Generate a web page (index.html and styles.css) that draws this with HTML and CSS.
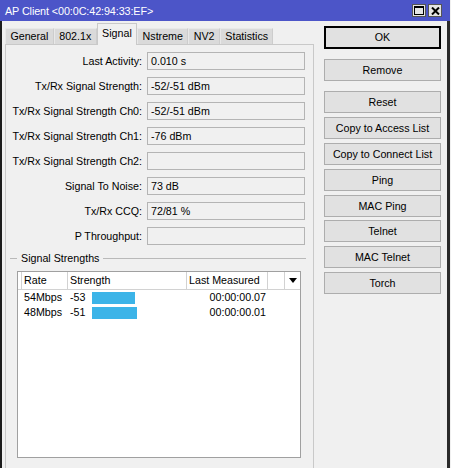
FILE: index.html
```html
<!DOCTYPE html>
<html>
<head>
<meta charset="utf-8">
<link rel="stylesheet" href="styles.css">
</head>
<body>
<div class="window">
  <div class="titlebar">
    <span class="title">AP Client &lt;00:0C:42:94:33:EF&gt;</span>
    <div class="ctls">
      <span class="ctl"><svg width="10" height="9" viewBox="0 0 10 9"><rect x="0.5" y="0.5" width="9" height="8" fill="none" stroke="#000"/><rect x="0" y="0" width="10" height="2" fill="#000"/></svg></span>
      <span class="ctl"><svg width="9" height="8" viewBox="0 0 9 8"><path d="M1 0.5 L8 7.5 M8 0.5 L1 7.5" stroke="#000" stroke-width="2"/></svg></span>
    </div>
  </div>
  <div class="frame">
    <div class="left">
      <div class="tabs">
        <span class="tab">General</span>
        <span class="tab">802.1x</span>
        <span class="tab active">Signal</span>
        <span class="tab">Nstreme</span>
        <span class="tab">NV2</span>
        <span class="tab">Statistics</span>
      </div>
      <div class="panel">
        <div class="form">
          <label>Last Activity:</label><div class="field">0.010 s</div>
          <label>Tx/Rx Signal Strength:</label><div class="field">-52/-51 dBm</div>
          <label>Tx/Rx Signal Strength Ch0:</label><div class="field">-52/-51 dBm</div>
          <label>Tx/Rx Signal Strength Ch1:</label><div class="field">-76 dBm</div>
          <label>Tx/Rx Signal Strength Ch2:</label><div class="field"></div>
          <label>Signal To Noise:</label><div class="field">73 dB</div>
          <label>Tx/Rx CCQ:</label><div class="field">72/81 %</div>
          <label>P Throughput:</label><div class="field"></div>
        </div>
        <div class="group">
          <div class="group-head"><span class="gline short"></span><span class="glabel">Signal Strengths</span><span class="gline"></span></div>
          <div class="table">
            <div class="row head">
              <span class="c c0"></span>
              <span class="c">Rate</span>
              <span class="c">Strength</span>
              <span class="c">Last Measured</span>
              <span class="c"></span>
              <span class="c arrow"><span class="tri"></span></span>
            </div>
            <div class="row">
              <span class="c c0"></span>
              <span class="c">54Mbps</span>
              <span class="c strength"><span class="num">-53</span><span class="bar" style="width:43px"></span></span>
              <span class="c time">00:00:00.07</span>
              <span class="c"></span>
              <span class="c"></span>
            </div>
            <div class="row">
              <span class="c c0"></span>
              <span class="c">48Mbps</span>
              <span class="c strength"><span class="num">-51</span><span class="bar" style="width:45px"></span></span>
              <span class="c time">00:00:00.01</span>
              <span class="c"></span>
              <span class="c"></span>
            </div>
          </div>
        </div>
      </div>
    </div>
    <div class="buttons">
      <div class="btn default">OK</div>
      <div class="btn sep">Remove</div>
      <div class="btn sep">Reset</div>
      <div class="btn">Copy to Access List</div>
      <div class="btn">Copy to Connect List</div>
      <div class="btn">Ping</div>
      <div class="btn">MAC Ping</div>
      <div class="btn">Telnet</div>
      <div class="btn">MAC Telnet</div>
      <div class="btn">Torch</div>
    </div>
  </div>
</div>
</body>
</html>
```
FILE: styles.css
```css
html, body {
  margin: 0;
  padding: 0;
  background: #f0f0f0;
}
body {
  font-family: "Liberation Sans", Arial, sans-serif;
  font-size: 10.7px;
  color: #000;
}
.window {
  width: 450px;
  height: 468px;
  display: flex;
  flex-direction: column;
  overflow: hidden;
}
.titlebar {
  height: 21px;
  flex: none;
  background: #4c55c8;
  color: #fff;
  display: flex;
  align-items: center;
  padding: 0 8px 0 5px;
}
.title {
  font-size: 10.8px;
  letter-spacing: -0.1px;
}
.ctls {
  margin-left: auto;
  display: flex;
  gap: 2px;
}
.ctl {
  width: 12px;
  height: 11px;
  border: 1px solid #555;
  background: #e4e4e4;
  display: flex;
  align-items: center;
  justify-content: center;
}
.ctl svg { display: block; }
.frame {
  flex: 1;
  display: flex;
  gap: 10px;
  border-left: 2px solid #1c1c1c;
  border-right: 3px solid #2a2a2a;
  padding: 3px 6px 0 3px;
  background: #f0f0f0;
  min-height: 0;
}
.left {
  width: 309px;
  display: flex;
  flex-direction: column;
}
.tabs {
  height: 20px;
  display: flex;
  align-items: flex-end;
  position: relative;
  z-index: 1;
}
.tab {
  height: 15px;
  line-height: 15px;
  padding: 0 4.4px;
  background: #dadada;
  border: 1px solid #e8e8e8;
  border-bottom: none;
  border-right-color: #cdcdcd;
}
.tab.active {
  line-height: 18px;
  background: #f0f0f0;
  border: 1px solid #c9c9c9;
  border-bottom: none;
  margin-bottom: -1px;
  height: 21px;
}
.panel {
  flex: 1;
  border: 1px solid #c9c9c9;
  border-bottom: none;
  background: #f0f0f0;
  padding-top: 7px;
}
.form {
  display: grid;
  grid-template-columns: 136px 158px;
  column-gap: 5px;
  row-gap: 7px;
  align-items: center;
}
.form label {
  text-align: right;
  white-space: nowrap;
}
.field {
  height: 18px;
  box-sizing: border-box;
  border: 1px solid #b4b4b4;
  background: #f0f0f0;
  padding-left: 3px;
  line-height: 16px;
}
.group {
  margin: 6px 7px 0 4px;
}
.group-head {
  display: flex;
  align-items: center;
  height: 14px;
}
.gline {
  flex: 1;
  height: 1px;
  background: #b9b9b9;
}
.gline.short {
  flex: none;
  width: 7px;
}
.glabel {
  padding: 0 4px;
}
.table {
  margin: 6px 5px 0 7px;
  height: 187px;
  box-sizing: border-box;
  border: 1px solid #a0a0a0;
  background: #fff;
}
.row {
  display: grid;
  grid-template-columns: 4px 46px 119px 81px 17px 15px;
  height: 15px;
  line-height: 15px;
}
.row.head {
  height: 17px;
  line-height: 17px;
  border-bottom: 1px solid #d2d2d2;
}
.c {
  padding-left: 2px;
  white-space: nowrap;
  overflow: hidden;
}
.c0 { padding: 0; }
.head .c {
  border-right: 1px solid #d2d2d2;
}
.head .c.arrow {
  border-right: none;
  display: flex;
  align-items: center;
  justify-content: center;
  padding: 0;
}
.tri {
  width: 0;
  height: 0;
  border-left: 4.5px solid transparent;
  border-right: 4.5px solid transparent;
  border-top: 5px solid #000;
}
.strength {
  display: flex;
  align-items: center;
}
.num {
  width: 22px;
  flex: none;
}
.bar {
  height: 12px;
  background: #3cb4e8;
}
.time {
  text-align: right;
  padding: 0 2px 0 0;
}
.buttons {
  width: 117px;
  display: flex;
  flex-direction: column;
  gap: 3.9px;
  padding-top: 2px;
}
.btn {
  height: 22px;
  box-sizing: border-box;
  border: 1px solid #adadad;
  background: #e1e1e1;
  text-align: center;
  line-height: 20px;
  font-size: 10.7px;
}
.btn.default {
  height: 23px;
  border: 1px solid #000;
  box-shadow: inset 0 0 0 1px #000;
  line-height: 21px;
}
.btn.sep {
  margin-top: 6.1px;
}
```
